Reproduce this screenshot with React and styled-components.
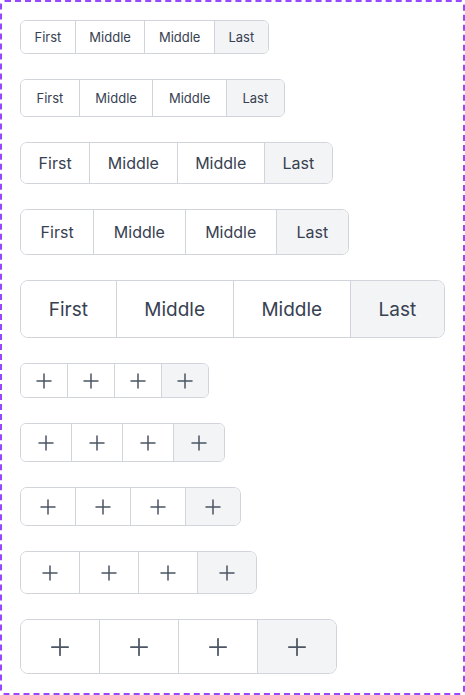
import React from "react";
import styled, { createGlobalStyle } from "styled-components";
import { Plus } from "lucide-react";

const GlobalStyle = createGlobalStyle`
  html, body {
    margin: 0;
    padding: 0;
    background: #ffffff;
  }
  body {
    font-family: Inter, "Noto Sans", sans-serif;
  }
`;

const Frame = styled("div")`
  box-sizing: border-box;
  width: 465px;
  height: 695px;
  border: 2px dashed #9747ff;
  border-radius: 5px;
  padding: 18px 18px;
  display: flex;
  flex-direction: column;
  align-items: flex-start;
  gap: 25px;
`;

const Group = styled("div")`
  display: inline-flex;
  box-sizing: border-box;
  height: ${(p) => p.$h}px;
  border: 1px solid #d1d5db;
  border-radius: ${(p) => p.$r}px;
  overflow: hidden;
`;

const TextButton = styled("button")`
  box-sizing: border-box;
  height: 100%;
  margin: 0;
  border: none;
  border-left: 1px solid #d1d5db;
  padding: 0 ${(p) => p.$px}px;
  background: ${(p) => (p.$last ? "#f3f4f6" : "#ffffff")};
  color: #374151;
  font-family: Inter, "Noto Sans", sans-serif;
  font-size: ${(p) => p.$fs}px;
  font-weight: 400;
  display: flex;
  align-items: center;
  justify-content: center;

  &:first-child {
    border-left: none;
  }
`;

const IconButton = styled("button")`
  box-sizing: content-box;
  width: ${(p) => p.$w}px;
  height: 100%;
  margin: 0;
  padding: 0;
  border: none;
  border-left: 1px solid #d1d5db;
  background: ${(p) => (p.$last ? "#f3f4f6" : "#ffffff")};
  color: #4b5563;
  display: flex;
  align-items: center;
  justify-content: center;

  &:first-child {
    border-left: none;
  }
`;

const textSizes = [
  { h: 34, px: 13.5, fs: 13, r: 6 },
  { h: 38, px: 15.5, fs: 13, r: 6 },
  { h: 42, px: 17.6, fs: 16, r: 7 },
  { h: 46, px: 19.6, fs: 16, r: 7 },
  { h: 58, px: 27.7, fs: 19, r: 8 },
];

const iconSizes = [
  { h: 35, w: 46, icon: 24, r: 6 },
  { h: 39, w: 50, icon: 24, r: 6 },
  { h: 39, w: 54, icon: 24, r: 7 },
  { h: 43, w: 58, icon: 24, r: 7 },
  { h: 55, w: 78, icon: 28, r: 8 },
];

const labels = ["First", "Middle", "Middle", "Last"];

const App = () => {
  return (
    <>
      <GlobalStyle />
      <Frame>
        {textSizes.map((s, i) => (
          <Group key={"t" + i} $h={s.h} $r={s.r}>
            {labels.map((label, j) => (
              <TextButton key={j} $px={s.px} $fs={s.fs} $last={j === 3}>
                {label}
              </TextButton>
            ))}
          </Group>
        ))}
        {iconSizes.map((s, i) => (
          <Group key={"i" + i} $h={s.h} $r={s.r}>
            {[0, 1, 2, 3].map((j) => (
              <IconButton key={j} $w={s.w} $last={j === 3}>
                <Plus size={s.icon} strokeWidth={1.5} />
              </IconButton>
            ))}
          </Group>
        ))}
      </Frame>
    </>
  );
};

export default App;
